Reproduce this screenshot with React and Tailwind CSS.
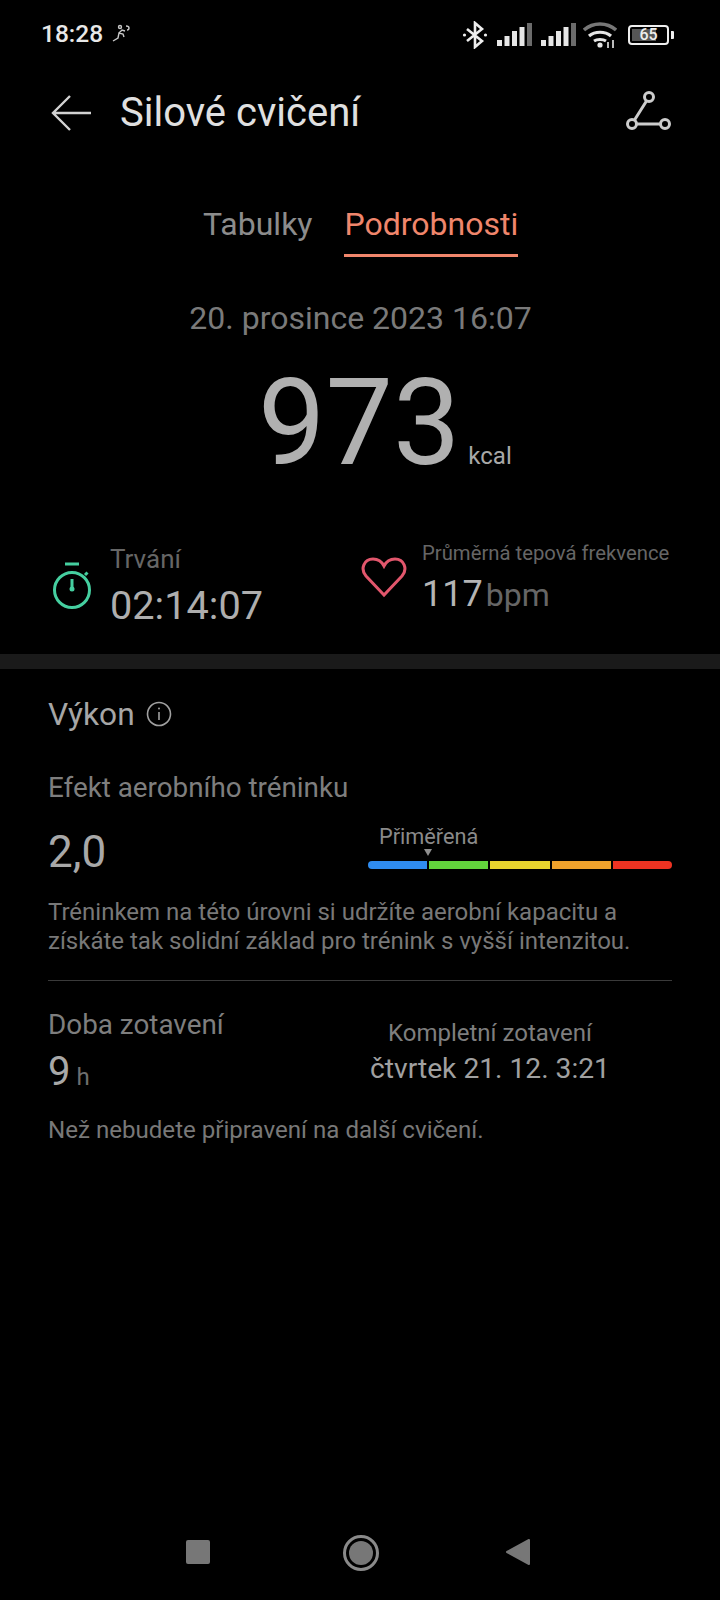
import React from "react"

const font = { fontFamily: "Roboto, sans-serif" }

function Signal() {
  return (
    <svg width="35" height="23" viewBox="0 0 35 23">
      <rect x="0" y="17" width="5" height="6" fill="#e6e6e6" />
      <rect x="7.5" y="13" width="5" height="10" fill="#e6e6e6" />
      <rect x="15" y="8" width="5" height="15" fill="#e6e6e6" />
      <rect x="22.5" y="4" width="5" height="19" fill="#e6e6e6" />
      <rect x="30" y="0" width="5" height="23" fill="#6b6b6b" />
    </svg>
  )
}

function StatusBar() {
  return (
    <div className="h-[68px] flex items-center justify-between pl-[41px] pr-[46px] pt-[1px]">
      <div className="flex items-center gap-[8px]">
        <span className="text-[24.5px] leading-none font-medium text-[#e8e8e8]">18:28</span>
        <svg width="20" height="20" viewBox="0 0 20 20" fill="none" stroke="#c8c8c8" strokeWidth="1.4" className="-mt-[4px]">
          <circle cx="9" cy="4" r="1.5" />
          <path d="M2 18l5-3 1-5 4 1 1 3M8 10l3-3 3 1M15 3c2 0 3 1 3 2s-1 2-2 2" />
        </svg>
      </div>
      <div className="flex items-center">
        <svg width="26" height="28" viewBox="0 0 26 28" fill="none" stroke="#eeeeee" strokeWidth="2.6" className="mr-[9px]">
          <path d="M5 8l15 12-7 6V2l7 6L5 20" />
          <circle cx="2.5" cy="14" r="1.6" fill="#eeeeee" stroke="none" />
          <circle cx="23.5" cy="14" r="1.6" fill="#eeeeee" stroke="none" />
        </svg>
        <Signal />
        <div className="w-[9px]" />
        <Signal />
        <svg width="34" height="26" viewBox="0 0 34 26" fill="none" className="ml-[7px]">
          <path d="M1 8c9-8 23-8 32 0" stroke="#777777" strokeWidth="3.4" />
          <path d="M6 14c6-5 16-5 22 0" stroke="#e6e6e6" strokeWidth="3.2" />
          <path d="M11 19c3-2 9-2 12 0" stroke="#e6e6e6" strokeWidth="3" />
          <circle cx="17" cy="23" r="2.6" fill="#e6e6e6" />
          <path d="M25 20v6M30 18v8" stroke="#bbbbbb" strokeWidth="2" />
        </svg>
        <div className="ml-[11px] w-[41px] h-[20px] rounded-[4px] border-2 border-[#eeeeee] relative flex items-center justify-center overflow-hidden">
          <div className="absolute left-[2px] top-[2px] bottom-[2px] w-[24px] bg-[#555555]" />
          <span className="relative text-[16px] leading-none font-medium text-[#eeeeee]">65</span>
        </div>
        <div className="ml-[2px] w-[3px] h-[8px] bg-[#eeeeee] rounded-r-[1px]" />
      </div>
    </div>
  )
}

function Header() {
  return (
    <div className="h-[90px] flex items-center justify-between pl-[50px] pr-[48px]">
      <div className="flex items-center">
        <svg width="42" height="38" viewBox="0 0 42 38" fill="none" stroke="#d2d2d2" strokeWidth="2.4">
          <path d="M41 19H3M20 2L3 19l17 17" />
        </svg>
        <span className="ml-[28px] text-[40px] leading-none text-[#e0e0e0]">Silové cvičení</span>
      </div>
      <svg width="46" height="40" viewBox="0 0 46 40" fill="none" stroke="#cccccc" strokeWidth="3" className="-mt-[4px]">
        <circle cx="23" cy="6" r="4.5" />
        <circle cx="6" cy="33" r="4.5" />
        <circle cx="39" cy="33" r="4.5" />
        <path d="M20.5 10L8.5 29M10.5 33h24" />
      </svg>
    </div>
  )
}

function Tabs() {
  return (
    <div className="mt-[24px] pl-[203px] flex items-start gap-[32px] text-[32px] leading-none">
      <div className="pt-[26px] text-[#8c8c8c]">Tabulky</div>
      <div className="pt-[26px] pb-[14px] text-[#f0866c] border-b-[3px] border-[#f0866c]">Podrobnosti</div>
    </div>
  )
}

function Stat({ icon, className, children }) {
  return (
    <div className={"flex items-center " + className}>
      {icon}
      <div>{children}</div>
    </div>
  )
}

function Summary() {
  return (
    <div>
      <div className="mt-[43px] text-center pl-[1px] text-[32px] leading-[36px] text-[#7a7a7a]">20. prosince 2023 16:07</div>
      <div className="mt-[26px] h-[122px] pl-[258px] flex items-baseline">
        <span className="text-[120px] leading-[122px] text-[#b0b0b0]">973</span>
        <span className="ml-[8px] text-[24px] leading-[28px] text-[#a8a8a8]">kcal</span>
      </div>
      <div className="mt-[58px] h-[84px] flex">
        <Stat
          className="w-[360px] pl-[52px]"
          icon={
            <svg width="40" height="50" viewBox="0 0 40 50" fill="none" stroke="#45cfa0" strokeWidth="3" className="mr-[18px] mt-[4px]">
              <path d="M13 3h14M20 18v9" />
              <circle cx="20" cy="29" r="17.5" />
              <circle cx="20" cy="28" r="2.5" fill="#45cfa0" stroke="none" />
              <path d="M33 14l2.5-2.5" />
            </svg>
          }
        >
          <div className="mt-[4px] text-[26px] leading-[30px] text-[#666666]">Trvání</div>
          <div className="mt-[10px] text-[39.7px] leading-[44px] text-[#aeaeae]">02:14:07</div>
        </Stat>
        <Stat
          icon={
            <svg width="46" height="42" viewBox="0 0 46 42" fill="none" stroke="#e2566c" strokeWidth="3" className="mr-[15px] ml-[1px] -mt-[14px]">
              <path d="M23 39L5 20C-1 13 3 3 12 3c5 0 9 3 11 7 2-4 6-7 11-7 9 0 13 10 7 17z" />
            </svg>
          }
        >
          <div className="-mt-[12px] text-[20.3px] leading-[24px] text-[#666666]">Průměrná tepová frekvence</div>
          <div className="mt-[8px] flex items-baseline">
            <span className="text-[36px] leading-[42px] text-[#b4b4b4]">117</span>
            <span className="ml-[3px] text-[32px] leading-[42px] text-[#666666]">bpm</span>
          </div>
        </Stat>
      </div>
    </div>
  )
}

const segments = ["bg-[#2f8cf0] rounded-l-full", "bg-[#62d53c]", "bg-[#e8d52e]", "bg-[#f0a22c]", "bg-[#ee3322] rounded-r-full"]

function AerobicBar() {
  return (
    <div className="w-[304px] pt-[6px]">
      <div className="pl-[11px] text-[21.7px] leading-[24px] text-[#8a8a8a]">Přiměřená</div>
      <div className="relative h-[23px]">
        <svg width="8" height="7" viewBox="0 0 8 7" className="absolute left-[56px] top-[0px]">
          <path d="M0 0h8L4 7z" fill="#8f8f8f" />
        </svg>
        <div className="absolute left-0 right-0 top-[12px] flex gap-[2px]">
          {segments.map((c) => (
            <div key={c} className={"h-[8px] flex-1 " + c} />
          ))}
        </div>
      </div>
    </div>
  )
}

function Performance() {
  return (
    <div className="px-[48px]">
      <div className="mt-[26px] flex items-center">
        <span className="text-[31.7px] leading-[40px] text-[#a6a6a6]">Výkon</span>
        <svg width="26" height="26" viewBox="0 0 26 26" fill="none" stroke="#a0a0a0" strokeWidth="1.6" className="ml-[11px] -mt-[2px]">
          <circle cx="13" cy="13" r="11.5" />
          <path d="M13 11v8" />
          <circle cx="13" cy="7.5" r="1" fill="#a0a0a0" stroke="none" />
        </svg>
      </div>
      <div className="mt-[38px] text-[27.8px] leading-[30px] text-[#7e7e7e]">Efekt aerobního tréninku</div>
      <div className="mt-[16px] flex items-start justify-between">
        <span className="mt-[8px] text-[44px] leading-[50px] text-[#a8a8a8]">2,0</span>
        <AerobicBar />
      </div>
      <p className="mt-[21px] text-[24px] leading-[29px] text-[#787878]">
        Tréninkem na této úrovni si udržíte aerobní kapacitu a
        <br />
        získáte tak solidní základ pro trénink s vyšší intenzitou.
      </p>
      <div className="mt-[24px] h-[1px] bg-[#3a3a3a]" />
      <div className="mt-[28px] flex justify-between">
        <div>
          <div className="text-[27.85px] leading-[32px] text-[#7e7e7e]">Doba zotavení</div>
          <div className="mt-[8px] flex items-baseline">
            <span className="text-[40px] leading-[46px] text-[#a8a8a8]">9</span>
            <span className="ml-[6px] text-[24px] leading-[28px] text-[#6e6e6e]">h</span>
          </div>
        </div>
        <div className="w-[304px] text-center pr-[68px] pl-[8px] whitespace-nowrap flex flex-col items-center">
          <div className="mt-[10px] text-[24px] leading-[28px] text-[#7e7e7e]">Kompletní zotavení</div>
          <div className="mt-[6px] text-[28.2px] leading-[32px] text-[#a0a0a0]">čtvrtek 21. 12. 3:21</div>
        </div>
      </div>
      <div className="mt-[20px] text-[24.1px] leading-[30px] text-[#787878]">Než nebudete připravení na další cvičení.</div>
    </div>
  )
}

function NavBar() {
  return (
    <div className="mt-auto h-[96px] flex items-start pt-[30px] pl-[186px]">
      <div className="w-[24px] h-[24px] mt-[6px] rounded-[2px] bg-[#777777]" />
      <div className="ml-[133px] w-[36px] h-[36px] mt-[1px] rounded-full border-[3px] border-[#8a8a8a] flex items-center justify-center">
        <div className="w-[24px] h-[24px] rounded-full bg-[#777777]" />
      </div>
      <svg width="26" height="28" viewBox="0 0 26 28" className="ml-[126px] mt-[4px]">
        <path d="M24 2v24L2 14z" fill="#777777" stroke="#777777" strokeWidth="2" strokeLinejoin="round" />
      </svg>
    </div>
  )
}

export default function App() {
  return (
    <div className="w-[720px] h-[1600px] bg-black flex flex-col overflow-hidden" style={font}>
      <StatusBar />
      <Header />
      <Tabs />
      <Summary />
      <div className="mt-[28px] h-[15px] bg-[#1a1a1a]" />
      <Performance />
      <NavBar />
    </div>
  )
}
